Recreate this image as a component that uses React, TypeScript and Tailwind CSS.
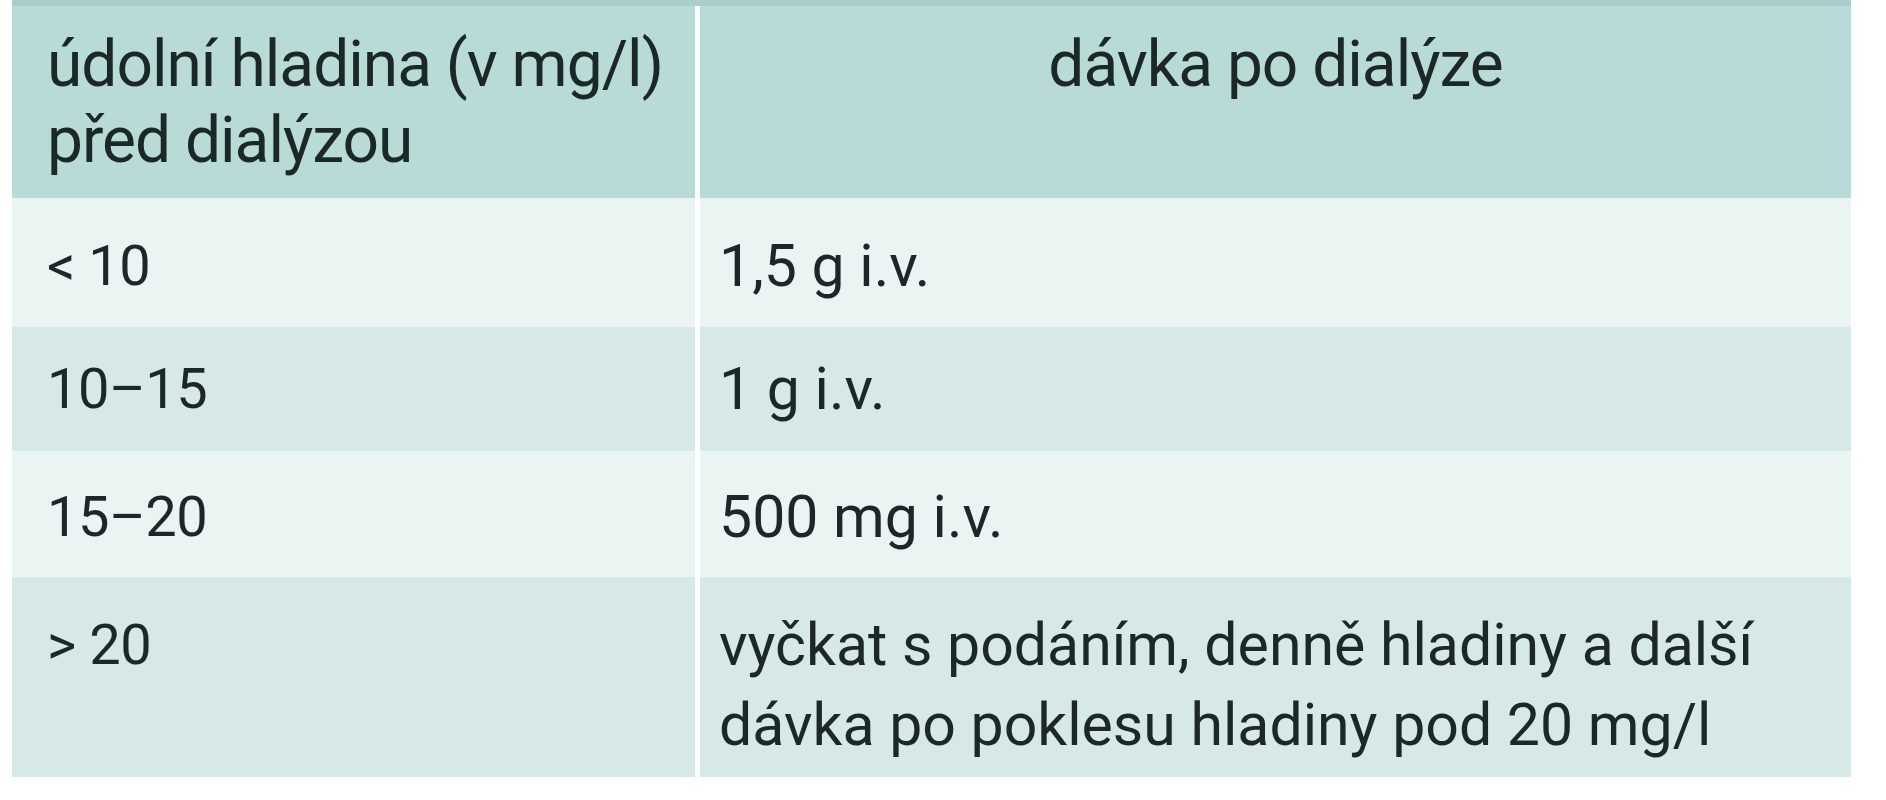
const rows = [
  {
    left: "< 10",
    right: ["1,5 g i.v."],
    h: "h-[129px]",
    bg: "bg-[#e9f4f3]",
    ptL: "pt-[29px]",
    ptR: "pt-[28px]",
  },
  {
    left: "10–15",
    right: ["1 g i.v."],
    h: "h-[124px]",
    bg: "bg-[#d6e9e6]",
    ptL: "pt-[23px]",
    ptR: "pt-[22px]",
  },
  {
    left: "15–20",
    right: ["500 mg i.v."],
    h: "h-[126px]",
    bg: "bg-[#e9f4f3]",
    ptL: "pt-[27px]",
    ptR: "pt-[26px]",
  },
  {
    left: "> 20",
    right: [
      "vyčkat s podáním, denně hladiny a další",
      "dávka po poklesu hladiny pod 20 mg/l",
    ],
    h: "h-[200px]",
    bg: "bg-[#d6e9e6]",
    ptL: "pt-[29px]",
    ptR: "pt-[28px]",
  },
];

export default function App() {
  return (
    <div className="h-[800px] w-[1886px] bg-white pl-[12px] font-[Roboto,sans-serif] text-[#1c2828]">
      <div className="w-[1839px] border-t-[6px] border-[#a9cdca]">
        {/* header */}
        <div className="flex h-[192px] gap-[5px] bg-white">
          <div className="w-[683px] bg-[#b8dbd8] pl-[35px] pt-[21px] text-[64px] leading-[76px] tracking-[-1px]">
            <p>údolní hladina (v mg/l)</p>
            <p>před dialýzou</p>
          </div>
          <div className="flex-1 bg-[#b8dbd8] pt-[21px] text-center text-[64px] leading-[76px] tracking-[-1px]">
            <p>dávka po dialýze</p>
          </div>
        </div>

        {rows.map((row) => (
          <div key={row.left} className={`flex gap-[5px] bg-white ${row.h}`}>
            <div
              className={`w-[683px] pl-[35px] text-[56px] leading-[79px] tracking-[-0.5px] ${row.ptL} ${row.bg}`}
            >
              {row.left}
            </div>
            <div
              className={`flex-1 pl-[19px] text-[59px] leading-[80px] ${row.ptR} ${row.bg}`}
            >
              {row.right.map((line) => (
                <p key={line}>{line}</p>
              ))}
            </div>
          </div>
        ))}
      </div>
    </div>
  );
}
